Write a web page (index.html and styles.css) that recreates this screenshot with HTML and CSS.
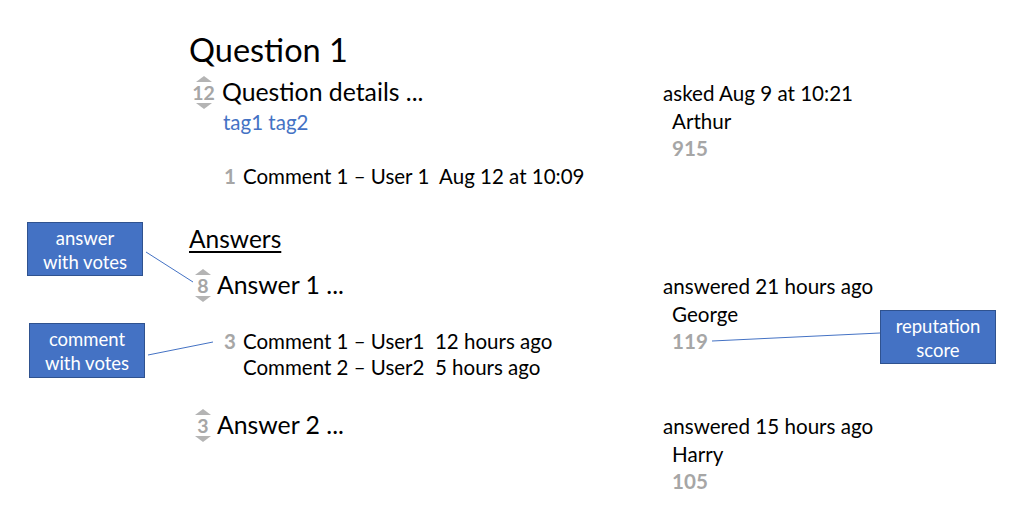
FILE: index.html
```html
<!DOCTYPE html>
<html lang="en">
<head>
<meta charset="utf-8">
<title>Question 1</title>
<link rel="stylesheet" href="styles.css">
</head>
<body>
<div class="page">
  <h1 class="title">Question 1</h1>

  <section class="post post--question">
    <div class="post-main">
      <div class="post-head">
        <div class="vote">
          <span class="arrow arrow--up"></span>
          <span class="vote-count">12</span>
          <span class="arrow arrow--down"></span>
        </div>
        <div class="post-text">Question details ...</div>
      </div>
      <div class="tags"><span class="tag">tag1</span> <span class="tag">tag2</span></div>
      <ul class="comments">
        <li class="comment"><span class="c-score">1</span><span class="c-text">Comment 1 – User 1&nbsp; Aug 12 at 10:09</span></li>
      </ul>
    </div>
    <div class="post-meta">
      <div class="meta-action">asked Aug 9 at 10:21</div>
      <div class="meta-user">Arthur</div>
      <div class="meta-rep">915</div>
    </div>
  </section>

  <h2 class="answers-heading">Answers</h2>

  <div class="answers">
    <section class="post post--answer">
      <div class="post-main">
        <div class="post-head">
          <div class="vote">
            <span class="arrow arrow--up"></span>
            <span class="vote-count">8</span>
            <span class="arrow arrow--down"></span>
          </div>
          <div class="post-text">Answer 1 ...</div>
        </div>
        <ul class="comments">
          <li class="comment"><span class="c-score">3</span><span class="c-text">Comment 1 – User1&nbsp; 12 hours ago</span></li>
          <li class="comment"><span class="c-score"></span><span class="c-text">Comment 2 – User2&nbsp; 5 hours ago</span></li>
        </ul>
      </div>
      <div class="post-meta">
        <div class="meta-action">answered 21 hours ago</div>
        <div class="meta-user">George</div>
        <div class="meta-rep">119</div>
      </div>
    </section>

    <section class="post post--answer">
      <div class="post-main">
        <div class="post-head">
          <div class="vote">
            <span class="arrow arrow--up"></span>
            <span class="vote-count">3</span>
            <span class="arrow arrow--down"></span>
          </div>
          <div class="post-text">Answer 2 ...</div>
        </div>
      </div>
      <div class="post-meta">
        <div class="meta-action">answered 15 hours ago</div>
        <div class="meta-user">Harry</div>
        <div class="meta-rep">105</div>
      </div>
    </section>
  </div>

  <svg class="annotations" width="1024" height="519" viewBox="0 0 1024 519" aria-hidden="true">
    <line x1="146" y1="252" x2="193" y2="282"/>
    <line x1="148" y1="355" x2="213" y2="342"/>
    <line x1="712" y1="341" x2="880" y2="333"/>
  </svg>

  <div class="callout callout--answer">answer<br>with votes</div>
  <div class="callout callout--comment">comment<br>with votes</div>
  <div class="callout callout--rep">reputation<br>score</div>
</div>
</body>
</html>
```

FILE: styles.css
```css
* { box-sizing: border-box; }

html, body {
  margin: 0;
  padding: 0;
  background: #ffffff;
}

body {
  font-family: Lato, "Liberation Sans", sans-serif;
  color: #000000;
  width: 1024px;
  height: 519px;
  overflow: hidden;
}

.page {
  position: relative;
  width: 1024px;
  height: 519px;
  padding: 30px 0 0 189px;
}

.title {
  margin: 0;
  font-size: 32.5px;
  font-weight: 400;
  line-height: 40px;
  height: 42px;
}

.post {
  display: grid;
  grid-template-columns: 474px 1fr;
  align-items: start;
}

.post--question {
  margin-bottom: 35px;
}

.post-head {
  display: flex;
  align-items: center;
  height: 40px;
}

.vote {
  display: flex;
  flex-direction: column;
  align-items: center;
  gap: 2px;
}

.post--question .vote {
  margin-left: 5px;
  width: 19px;
  margin-right: 9px;
}

.post--answer .vote {
  margin-left: 6px;
  width: 16px;
  margin-right: 6px;
}

.arrow {
  display: block;
  width: 0;
  height: 0;
  border-left: 8px solid transparent;
  border-right: 8px solid transparent;
}

.arrow--up { border-bottom: 6px solid #b4b4b4; }
.arrow--down { border-top: 6px solid #b4b4b4; }

.vote-count {
  font-size: 19.5px;
  line-height: 17px;
  font-weight: 700;
  color: #a6a6a6;
}

.post-text {
  font-size: 24.8px;
  line-height: 40px;
}

.tags {
  margin-left: 34px;
  font-size: 20.5px;
  line-height: 20px;
  color: #4472c4;
  margin-bottom: 31px;
}

.comments {
  list-style: none;
  margin: 23px 0 0 0;
  padding: 0 0 0 35px;
}

.comment {
  display: flex;
  font-size: 20.5px;
  line-height: 26px;
  height: 26px;
}

.c-score {
  width: 19px;
  font-weight: 700;
  color: #a6a6a6;
}

.post-meta {
  padding-top: 7px;
  font-size: 20.6px;
  line-height: 28px;
}

.meta-user,
.meta-rep {
  padding-left: 9px;
}

.meta-rep {
  font-weight: 700;
  color: #a6a6a6;
  line-height: 27px;
}

.answers-heading {
  margin: 0 0 11px 0;
  font-size: 24.5px;
  font-weight: 400;
  line-height: 30px;
  text-decoration: underline;
  text-decoration-thickness: 1.5px;
  text-underline-offset: 3px;
}

.answers {
  display: flex;
  flex-direction: column;
  gap: 25px;
}

.annotations {
  position: absolute;
  left: 0;
  top: 0;
  pointer-events: none;
}

.annotations line {
  stroke: #4472c4;
  stroke-width: 1;
}

.callout {
  position: absolute;
  width: 116px;
  height: 54px;
  background: #4472c4;
  border: 1px solid #2f528f;
  color: #ffffff;
  font-size: 18.5px;
  line-height: 24px;
  text-align: center;
  display: flex;
  align-items: center;
  justify-content: center;
  padding-top: 1px;
}

.callout--answer { left: 27px; top: 222px; }
.callout--comment { left: 29px; top: 323px; height: 55px; }
.callout--rep { left: 880px; top: 310px; }
```
